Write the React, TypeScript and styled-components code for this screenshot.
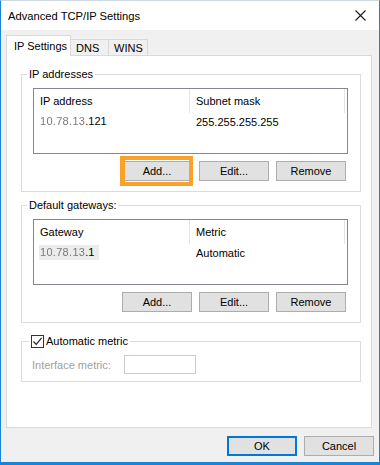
import React from 'react';
import styled, {createGlobalStyle} from 'styled-components';

const GlobalStyle = createGlobalStyle`
    html, body {
        margin: 0;
        padding: 0;
        background: #ffffff;
    }
    body {
        font-family: "Liberation Sans", Arial, sans-serif;
        font-size: 11px;
        color: #000000;
    }
    * {
        box-sizing: border-box;
    }
`;

const Window = styled.div`
    width: 380px;
    height: 465px;
    display: flex;
    flex-direction: column;
    border: 1px solid #1883d7;
    border-top: 1px solid #cfd8e0;
    border-bottom-width: 3px;
    background: #f0f0f0;
`;

const TitleBar = styled.div`
    height: 29px;
    display: flex;
    align-items: center;
    justify-content: space-between;
    padding: 0 8px 0 7px;
    background: #ffffff;
`;

const Title = styled.span`
    font-size: 11.2px;
    color: #000000;
    margin-top: 1px;
`;

const CloseButton = styled.button`
    width: 22px;
    height: 22px;
    border: none;
    background: transparent;
    padding: 0;
    display: flex;
    align-items: center;
    justify-content: center;
`;

const Body = styled.div`
    flex: 1;
    display: flex;
    flex-direction: column;
    padding: 5px 6px 0 5px;
`;

const TabStrip = styled.div`
    display: flex;
    align-items: flex-end;
    height: 21px;
    margin-bottom: -1px;
    position: relative;
    z-index: 1;
`;

const Tab = styled.div<{ $active?: boolean; $width: number }>`
    width: ${(p) => p.$width}px;
    height: ${(p) => (p.$active ? 21 : 16)}px;
    margin-bottom: ${(p) => (p.$active ? 0 : 1)}px;
    margin-left: ${(p) => (p.$active ? 0 : -1)}px;
    border: 1px solid #d9d9d9;
    border-bottom: none;
    background: ${(p) => (p.$active ? '#ffffff' : '#f0f0f0')};
    padding: ${(p) => (p.$active ? '3px 0 0 7px' : '1px 0 0 5px')};
    font-size: 11px;
    line-height: 14px;
    white-space: nowrap;
`;

const Panel = styled.div`
    height: 373px;
    margin-right: 1px;
    background: #ffffff;
    border: 1px solid #d9d9d9;
    padding: 12px 10px 0 14px;
    display: flex;
    flex-direction: column;
`;

const Group = styled.fieldset<{ $gap?: number }>`
    margin: ${(p) => p.$gap ?? 0}px 0 0 0;
    padding: 7px 13px 10px 11px;
    border: 1px solid #dcdcdc;
    min-width: 0;
`;

const MetricGroup = styled(Group)`
    padding: 7px 10px 7px 10px;
`;

const Legend = styled.legend<{ $shift?: number }>`
    padding: 0 2px;
    margin-left: ${(p) => p.$shift ?? -6}px;
    font-size: 11px;
    line-height: 13px;
    display: flex;
    align-items: center;
    gap: 2px;
`;

const ListBox = styled.div`
    height: 66px;
    margin-right: -1px;
    border: 1px solid #828790;
    background: #ffffff;
    font-size: 11px;
`;

const ListHeader = styled.div`
    display: grid;
    grid-template-columns: 156px 155px;
    height: 24px;
`;

const HeaderCell = styled.div`
    border-right: 1px solid #e5e5e5;
    padding: 0 0 0 6px;
    display: flex;
    align-items: center;
`;

const ListRow = styled.div`
    display: grid;
    grid-template-columns: 156px 155px;
    height: 17px;
    align-items: center;
`;

const Cell = styled.div<{ $pad?: number }>`
    padding-left: ${(p) => p.$pad ?? 5}px;
    white-space: nowrap;
`;

const CellLabel = styled.span<{ $selected?: boolean }>`
    display: inline-block;
    line-height: 15px;
    padding: 0 5px 0 1px;
    background: ${(p) => (p.$selected ? '#ececec' : 'transparent')};
`;

// the address is pixelated out in the screenshot
const Blurred = styled.span`
    color: #7a7a7a;
    filter: blur(0.7px);
    letter-spacing: 0.3px;
`;

const ButtonRow = styled.div`
    display: flex;
    justify-content: flex-end;
    gap: 7px;
    margin-top: 7px;
    padding-right: 1px;
`;

const Button = styled.button<{ $highlight?: boolean; $default?: boolean }>`
    position: relative;
    width: 70px;
    height: 20px;
    padding: 0;
    font-family: "Liberation Sans", Arial, sans-serif;
    font-size: 11px;
    color: #000000;
    background: #e1e1e1;
    border: 1px solid ${(p) => (p.$default ? '#0078d7' : '#adadad')};
    box-shadow: ${(p) => (p.$default ? 'inset 0 0 0 1px #0078d7' : 'none')};

    &::after {
        content: "";
        display: ${(p) => (p.$highlight ? 'block' : 'none')};
        position: absolute;
        top: -6px;
        bottom: -6px;
        left: -3px;
        right: -2px;
        border: 4px solid #f9a22b;
        border-left-width: 5px;
    }
`;

const CheckBox = styled.span`
    width: 13px;
    height: 13px;
    border: 1px solid #333333;
    background: #ffffff;
    display: inline-flex;
    align-items: center;
    justify-content: center;
`;

const MetricRow = styled.div`
    display: flex;
    align-items: center;
`;

const DisabledLabel = styled.span`
    width: 92px;
    color: #a0a0a0;
    font-size: 11px;
`;

const MetricInput = styled.div`
    width: 72px;
    height: 19px;
    border: 1px solid #cccccc;
    background: #ffffff;
`;

const Footer = styled.div`
    display: flex;
    justify-content: flex-end;
    gap: 7px;
    padding-top: 8px;
    margin-right: -1px;
`;

function AddressList({cols, value, extra, selected}: {cols: string[]; value: string; extra: string; selected?: boolean}) {
    return (
        <ListBox>
            <ListHeader>
                <HeaderCell>{cols[0]}</HeaderCell>
                <HeaderCell>{cols[1]}</HeaderCell>
            </ListHeader>
            <ListRow>
                <Cell>
                    <CellLabel $selected={selected}>
                        <Blurred>10.78.13</Blurred>{value}
                    </CellLabel>
                </Cell>
                <Cell $pad={6}>{extra}</Cell>
            </ListRow>
        </ListBox>
    );
}

export default function App() {
    return (
        <>
            <GlobalStyle/>
            <Window>
                <TitleBar>
                    <Title>Advanced TCP/IP Settings</Title>
                    <CloseButton aria-label="Close">
                        <svg width="11" height="11" viewBox="0 0 11 11">
                            <path d="M0.5 0.5 L10.5 10.5 M10.5 0.5 L0.5 10.5" stroke="#1b1b1b" strokeWidth="1.1" fill="none"/>
                        </svg>
                    </CloseButton>
                </TitleBar>
                <Body>
                    <TabStrip>
                        <Tab $active $width={65}>IP Settings</Tab>
                        <Tab $width={39}>DNS</Tab>
                        <Tab $width={40}>WINS</Tab>
                    </TabStrip>
                    <Panel>
                        <Group>
                            <Legend>IP addresses</Legend>
                            <AddressList cols={['IP address', 'Subnet mask']} value=".121" extra="255.255.255.255"/>
                            <ButtonRow>
                                <Button $highlight>Add...</Button>
                                <Button>Edit...</Button>
                                <Button>Remove</Button>
                            </ButtonRow>
                        </Group>
                        <Group $gap={7}>
                            <Legend>Default gateways:</Legend>
                            <AddressList cols={['Gateway', 'Metric']} value=".1" extra="Automatic" selected/>
                            <ButtonRow>
                                <Button>Add...</Button>
                                <Button>Edit...</Button>
                                <Button>Remove</Button>
                            </ButtonRow>
                        </Group>
                        <MetricGroup $gap={12}>
                            <Legend $shift={-3}>
                                <CheckBox>
                                    <svg width="11" height="11" viewBox="0 0 11 11">
                                        <path d="M1.5 5.5 L4.2 8.3 L9.6 1.8" stroke="#222222" strokeWidth="1.2" fill="none"/>
                                    </svg>
                                </CheckBox>
                                Automatic metric
                            </Legend>
                            <MetricRow>
                                <DisabledLabel>Interface metric:</DisabledLabel>
                                <MetricInput/>
                            </MetricRow>
                        </MetricGroup>
                    </Panel>
                    <Footer>
                        <Button $default>OK</Button>
                        <Button>Cancel</Button>
                    </Footer>
                </Body>
            </Window>
        </>
    );
}
